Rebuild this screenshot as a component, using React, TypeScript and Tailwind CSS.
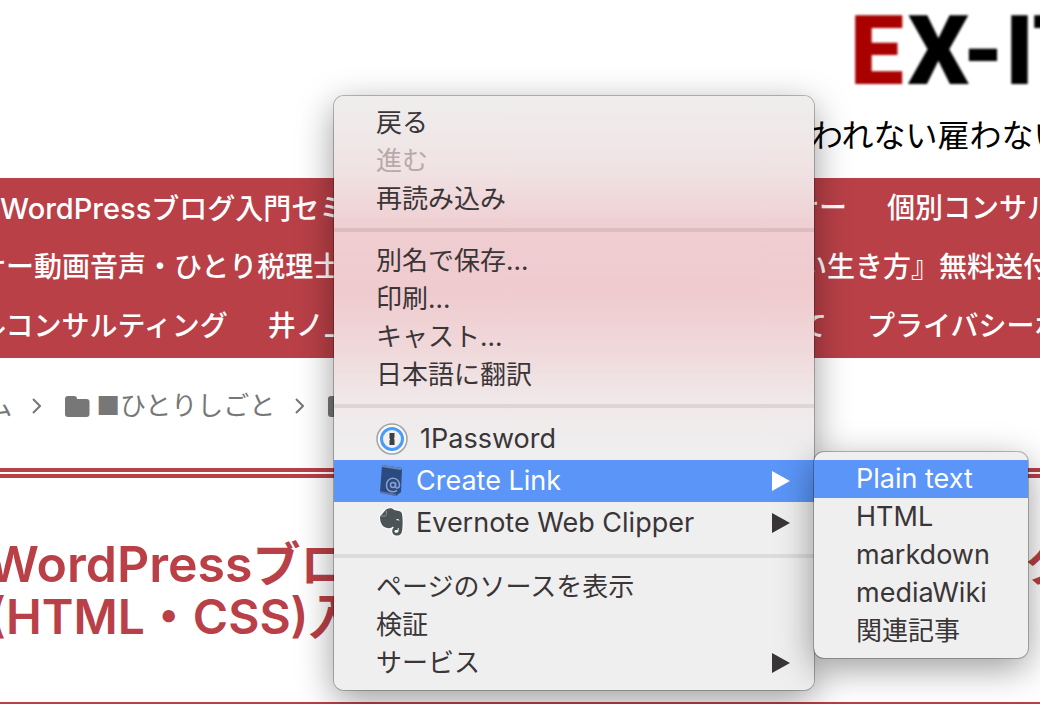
import { clsx } from "clsx";
import type { ReactNode } from "react";

const navRows = [
  { left: ["ブログ入門セミ"], right: ["ナー", "個別コンサルティング"] },
  { left: ["ナー動画音声・ひとり税理士"], right: ["い生き方』無料送付"] },
  { left: ["ルコンサルティング", "井ノ上"], right: ["て", "プライバシーポリシー"] },
];

function OnePasswordIcon() {
  return (
    <svg className="mr-1 size-8 shrink-0" viewBox="0 0 32 32" aria-hidden="true">
      <circle cx="16" cy="16" r="15" fill="#fafafa" stroke="#a3a3a3" strokeWidth="1.5" />
      <circle cx="16" cy="16" r="10.5" fill="#f1f1f1" stroke="#4a9df5" strokeWidth="3" />
      <path d="M13.500 10h5v4.500l-.7 1 .7 1V22h-5v-4.500l.7-1-.7-1z" fill="#3f4043" />
    </svg>
  );
}

function CreateLinkIcon() {
  return (
    <svg className="size-8 shrink-0" viewBox="0 0 32 32" aria-hidden="true">
      <path d="M6 0l20 3-1 24-5 4-16-4z" fill="#2b4a80" />
      <path d="M6 0l20 3-1 2L6 2z" fill="#6b88bb" />
      <path d="M4 26l16 3v2L4 28z" fill="#5674a8" />
      <circle cx="17" cy="20" r="2.5" fill="none" stroke="#88a2d0" strokeWidth="1.5" />
      <path d="M19.5 17.500v4c0 2.500 4 2 4-1.500 0-9-13-9-13 0 0 7 6.500 8 10.500 5.500" fill="none" stroke="#88a2d0" strokeWidth="1.5" />
    </svg>
  );
}

function EvernoteIcon() {
  return (
    <svg className="size-8 shrink-0" viewBox="0 0 32 32" aria-hidden="true">
      <path
        d="M10 2.500c3-2 7-1.500 8 .5l5 1c2 .4 3 1.500 3.200 4 .6 5 .6 10 0 15-.5 4-2 5.500-5 5.500-3.500 0-5-2-5-4.500s1.500-4 4-4h1.500v3H20c-1 0-1.500.5-1.500 1.300 0 1 .8 1.500 2 1.500 1.800 0 2.200-1.500 2.200-4.800-2 .8-5 .3-6-1.500-1 1.500-3 2-5.500 1.500-5-1-7.200-5-7.200-11.500z"
        fill="#4b5456"
        stroke="#fff"
        strokeWidth="2"
        strokeLinejoin="round"
        paintOrder="stroke"
      />
      <path d="M4.500 9h4.500c1 0 1.300-.5 1.300-1.500V3.500" fill="none" stroke="#8d9495" strokeWidth="1" />
      <path d="M20 13c.5-1.500 3-1.500 3.500.8-1-.5-2.500-.6-3.500-.8z" fill="#efefef" />
    </svg>
  );
}

function Folder() {
  return (
    <svg className="h-[21px] w-[25px] shrink-0" viewBox="0 0 25 21" fill="#777" aria-hidden="true">
      <path d="M3 0h6a3 3 0 0 1 3 3h9.500a3 3 0 0 1 3 3v12a3 3 0 0 1-3 3H3a3 3 0 0 1-3-3V3a3 3 0 0 1 3-3z" />
    </svg>
  );
}

function Chevron() {
  return (
    <svg className="h-4 w-[9px] shrink-0" viewBox="0 0 9 16" fill="none" stroke="#777" strokeWidth="2" aria-hidden="true">
      <path d="M1 1l7 7-7 7" />
    </svg>
  );
}

type ItemProps = {
  children: ReactNode;
  icon?: ReactNode;
  arrow?: boolean;
  active?: boolean;
  disabled?: boolean;
  latin?: boolean;
};

function MenuItem({ children, icon, arrow, active, disabled, latin }: ItemProps) {
  return (
    <button
      type="button"
      role="menuitem"
      disabled={disabled}
      aria-haspopup={arrow ? "menu" : undefined}
      className={clsx(
        "flex w-full items-center gap-2 pr-6 pl-[42px] text-left",
        icon ? "h-[42px]" : "h-[38px]",
        latin ? "text-[27px] leading-9" : "text-[26px] leading-9",
        active ? "bg-[#5a95f7] text-white" : disabled ? "text-[#b9a9ab]" : "text-[#3a3537]",
      )}
    >
      {icon}
      <span className="grow">{children}</span>
      {arrow && (
        <svg className="h-5 w-[18px] shrink-0" viewBox="0 0 18 20" fill="currentColor" aria-hidden="true">
          <path d="M0 0l18 10L0 20z" />
        </svg>
      )}
    </button>
  );
}

function Separator() {
  return <div role="separator" className="my-2.5 h-1 bg-black/8" />;
}

function ContextMenu() {
  return (
    <div
      role="menu"
      className="absolute top-24 left-[334px] w-[480px] rounded-[10px] bg-[linear-gradient(#efeeed,#f0e3e4_12%,#efcdd0_23%,#efcbce_33%,#f0d9db_43%,#f0e8e9_51%,#efefef_60%)] py-2 shadow-[0_0_0_1px_rgba(0,0,0,0.25),0_10px_36px_rgba(0,0,0,0.4)]"
    >
      <MenuItem>戻る</MenuItem>
      <MenuItem disabled>進む</MenuItem>
      <MenuItem>再読み込み</MenuItem>
      <Separator />
      <MenuItem>別名で保存...</MenuItem>
      <MenuItem>印刷...</MenuItem>
      <MenuItem>キャスト...</MenuItem>
      <MenuItem>日本語に翻訳</MenuItem>
      <Separator />
      <MenuItem icon={<OnePasswordIcon />} latin>1Password</MenuItem>
      <MenuItem icon={<CreateLinkIcon />} latin arrow active>Create Link</MenuItem>
      <MenuItem icon={<EvernoteIcon />} latin arrow>Evernote Web Clipper</MenuItem>
      <Separator />
      <MenuItem>ページのソースを表示</MenuItem>
      <MenuItem>検証</MenuItem>
      <MenuItem arrow>サービス</MenuItem>
    </div>
  );
}

function SubMenu() {
  return (
    <div
      role="menu"
      aria-label="Create Link"
      className="absolute top-[452px] left-[814px] w-[214px] rounded-[10px] bg-[#efefef] py-2 shadow-[0_0_0_1px_rgba(0,0,0,0.25),0_10px_36px_rgba(0,0,0,0.4)]"
    >
      <MenuItem latin active>Plain text</MenuItem>
      <MenuItem latin>HTML</MenuItem>
      <MenuItem latin>markdown</MenuItem>
      <MenuItem latin>mediaWiki</MenuItem>
      <MenuItem>関連記事</MenuItem>
    </div>
  );
}

export default function App() {
  return (
    <div className="relative min-h-screen overflow-hidden bg-white font-['Inter','Noto_Sans_CJK_JP',sans-serif] whitespace-nowrap">
      <header className="flex h-[178px] flex-col pt-[5px]">
        <div className="pl-[850px] font-[Roboto,sans-serif] text-[96px] leading-[92px] font-black text-black blur-[1px]">
          <span className="mr-1 text-[#a90000]">E</span>X-IT
        </div>
        <p className="pt-[15px] pl-[779px] text-[32px] leading-12 text-black">雇われない雇わない</p>
      </header>

      <nav className="h-[180px] bg-[#b94047] pt-px text-[28px] leading-[59px] font-medium text-white">
        {navRows.map((row, i) => (
          <div key={i} className="grid h-[59px] grid-cols-[791px_1fr]">
            <div className={clsx("flex gap-10", i > 0 && "-ml-[22px]")}>
              {row.left.map((text) => (
                <a key={text} href="#">
                  {i === 0 && <span className="text-[29px]">WordPress</span>}
                  {text}
                </a>
              ))}
            </div>
            <div className={clsx("flex gap-10", i > 0 && "pl-2")}>
              {row.right.map((text) => <a key={text} href="#">{text}</a>)}
            </div>
          </div>
        ))}
      </nav>

      <div className="-ml-[65px] flex h-[110px] items-start gap-5 pt-7 text-[26px] leading-10 text-[#777]">
        <a href="#">ホーム</a>
        <span className="flex h-10 items-center gap-6"><Chevron /><Folder /></span>
        <a href="#" className="-ml-3.5">■ひとりしごと</a>
        <span className="flex h-10 items-center gap-6"><Chevron /><Folder /></span>
      </div>

      <main>
        <div className="h-2.5 border-y-4 border-[#b94047]" />
        <h1 className="-ml-3 grid h-[226px] grid-cols-[1036px_1fr] content-start border-b-2 border-[#b94047] pt-[60px] text-[48px] leading-[52px] font-semibold text-[#b94047]">
          <span><span className="text-[50px]">WordPress</span>ブログ</span>
          <span>ク</span>
          <span>(HTML・CSS)入門</span>
        </h1>
      </main>

      <ContextMenu />
      <SubMenu />
    </div>
  );
}
